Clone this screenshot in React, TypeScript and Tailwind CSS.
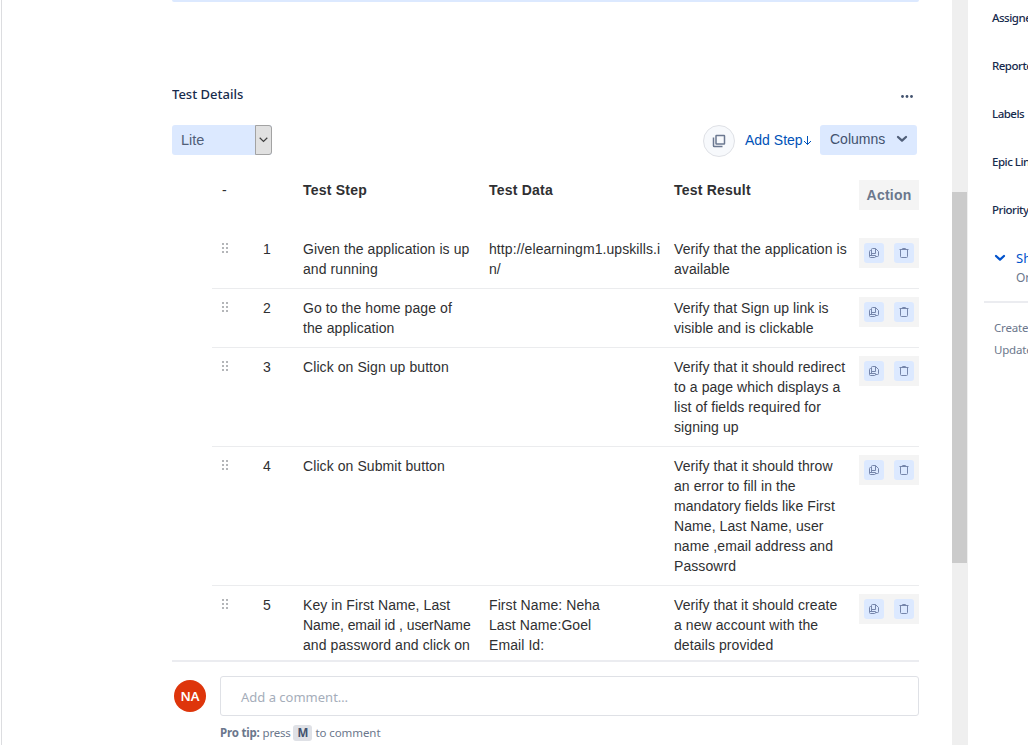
import React from "react";

type Step = { step: string[]; data: string[]; result: string[] };

const steps: Step[] = [
  {
    step: ["Given the application is up", "and running"],
    data: ["http://elearningm1.upskills.i", "n/"],
    result: ["Verify that the application is", "available"],
  },
  {
    step: ["Go to the home page of", "the application"],
    data: [],
    result: ["Verify that Sign up link is", "visible and is clickable"],
  },
  {
    step: ["Click on Sign up button"],
    data: [],
    result: [
      "Verify that it should redirect",
      "to a page which displays a",
      "list of fields required for",
      "signing up",
    ],
  },
  {
    step: ["Click on Submit button"],
    data: [],
    result: [
      "Verify that it should throw",
      "an error to fill in the",
      "mandatory fields like First",
      "Name, Last Name, user",
      "name ,email address and",
      "Passowrd",
    ],
  },
  {
    step: ["Key in First Name, Last", "Name, email id , userName", "and password and click on"],
    data: ["First Name: Neha", "Last Name:Goel", "Email Id:"],
    result: ["Verify that it should create", "a new account with the", "details provided"],
  },
];

const fields = ["Assignee", "Reporter", "Labels", "Epic Link", "Priority"];

const Lines = ({ lines }: { lines: string[] }) => (
  <div className="whitespace-nowrap">
    {lines.map((l) => (
      <div key={l} className={l.includes("userName") ? "tracking-[-0.08px]" : ""}>
        {l}
      </div>
    ))}
  </div>
);

const Grip = () => (
  <svg width="8" height="12" viewBox="0 0 8 12" fill="#b4b6b9">
    {[0, 4, 8].map((y) => (
      <g key={y}>
        <rect x="0" y={y} width="2" height="2" />
        <rect x="4" y={y} width="2" height="2" />
      </g>
    ))}
  </svg>
);

const CloneIcon = () => (
  <svg width="10" height="10" viewBox="0 0 10 10" fill="none" stroke="#7686ab" strokeWidth="1">
    <path d="M2.500 7.500v-6q0-1 1-1h3l3 3v4q0 1-1 1h-2" />
    <path d="M2.500 2.500h-1q-1 0-1 1v5q0 1 1 1h4q1 0 1-1v-1h-6M6.500 .5v5h-4" />
  </svg>
);

const TrashIcon = () => (
  <svg width="10" height="10" viewBox="0 0 10 10" fill="none" stroke="#7686ab" strokeWidth="1">
    <path d="M.5 1.500h9M3 1.500q0-1 1-1h2q1 0 1 1M1.500 1.500v7q0 1 1 1h5q1 0 1-1v-7" />
  </svg>
);

const Chevron = ({ className }: { className: string }) => (
  <svg className={className} width="12" height="8" viewBox="0 0 12 8" fill="none" stroke="currentColor" strokeWidth="2.300" strokeLinecap="round" strokeLinejoin="round">
    <path d="M2 2l4 3.600L10 2" />
  </svg>
);

const Row = ({ row, index }: { row: Step; index: number }) => (
  <div className="ml-[40px] flex w-[707px] shrink-0 border-b border-[#ebecee] pt-[9px] pb-[9px] tracking-[0.08px]">
    <div className="w-[51px] pt-[4px] pl-[10px]">
      <Grip />
    </div>
    <div className="w-[40px]">{index}</div>
    <div className="w-[186px]">
      <Lines lines={row.step} />
    </div>
    <div className="w-[185px]">
      <Lines lines={row.data} />
    </div>
    <div className="w-[185px]">
      <Lines lines={row.result} />
    </div>
    <div className="-mt-px flex h-[30px] w-[60px] items-center gap-[10px] bg-[#f4f4f4] pl-[5px]">
      <span className="flex size-5 items-center justify-center rounded-[3px] bg-[#dce9ff]">
        <CloneIcon />
      </span>
      <span className="flex size-5 items-center justify-center rounded-[3px] bg-[#dce9ff]">
        <TrashIcon />
      </span>
    </div>
  </div>
);

export default function App() {
  return (
    <div className="flex h-[745px] w-[1028px] overflow-hidden bg-white font-['Liberation_Sans',sans-serif] text-[14px] leading-5 text-[#2f3032]">
      <div className="ml-px flex w-[951px] flex-col border-l border-[#dcdde0] pl-[170px]">
        <div className="flex h-[660px] w-[747px] flex-col overflow-hidden">
          <div className="h-[2px] shrink-0 rounded-b-[3px] bg-[#dce9ff]" />
          <div className="mt-[82px] flex h-5 shrink-0 items-center justify-between pr-[6px]">
            <h2 className="font-['Noto_Sans',sans-serif] text-[13px] font-medium text-[#172b4d]">Test Details</h2>
            <svg className="mt-[4px]" width="12" height="3" viewBox="0 0 12 3" fill="#42526e">
              <circle cx="1.500" cy="1.500" r="1.400" />
              <circle cx="6" cy="1.500" r="1.400" />
              <circle cx="10.500" cy="1.500" r="1.400" />
            </svg>
          </div>
          <div className="mt-[21px] flex h-8 shrink-0 items-start">
            <div className="flex h-[30px] w-[100px] items-center justify-between rounded-[3px] bg-[#dce9ff] pl-[9px] text-[14.500px] text-[#505f79]">
              <span>Lite</span>
              <span className="flex h-[30px] w-[17px] items-center justify-center rounded-r-[3px] border border-[#a3a3a3] bg-[#e1e1e1]">
                <svg width="9" height="6" viewBox="0 0 9 6" fill="none" stroke="#404040" strokeWidth="1.200">
                  <path d="M.7.8l3.800 3.700L8.300.8" />
                </svg>
              </span>
            </div>
            <div className="ml-[431px] flex size-8 items-center justify-center rounded-full border border-[#dfe1e6] bg-[#f7f9fc]">
              <svg width="14" height="14" viewBox="0 0 14 14" fill="none" stroke="#6b7890" strokeWidth="1.500">
                <rect x="4" y="1.500" width="8.500" height="8.500" rx="0.500" />
                <path d="M1.500 3.500v8.200q0 .8.800.8h8.200" />
              </svg>
            </div>
            <div className="ml-[10px] flex h-[30px] w-[75px] items-center text-[#0052b8]">
              <span className="w-[58px] text-[14px] whitespace-nowrap">Add Step</span>
              <svg className="mt-px shrink-0" width="9" height="10" viewBox="0 0 9 10" fill="none" stroke="currentColor" strokeWidth="1">
                <path d="M4.500 0v8.500M1 5l3.500 3.500L8 5" />
              </svg>
            </div>
            <div className="flex h-[30px] w-[97px] items-center justify-between rounded-[3px] bg-[#dce9ff] pr-[9px] pb-[2px] pl-[10px] text-[14px] text-[#42526e]">
              <span>Columns</span>
              <Chevron className="text-[#505f79]" />
            </div>
          </div>
          <div className="mt-[23px] ml-[39px] flex h-[50px] w-[708px] shrink-0 text-[14px] font-bold tracking-[0.22px]">
            <div className="w-[92px] pl-[11px] font-normal">-</div>
            <div className="w-[186px]">Test Step</div>
            <div className="w-[185px]">Test Data</div>
            <div className="w-[185px]">Test Result</div>
            <div className="flex h-[30px] w-[60px] items-center justify-center bg-[#f4f4f4] text-[#6b778c]">Action</div>
          </div>
          {steps.map((s, i) => (
            <Row key={i} row={s} index={i + 1} />
          ))}
        </div>
        <div className="h-[85px] w-[747px] border-t-2 border-[#ebecf0] pt-[14px] font-['Noto_Sans',sans-serif]">
          <div className="flex items-center">
            <div className="ml-[2px] flex size-8 items-center justify-center rounded-full bg-[#de350b] text-[13px] font-semibold text-white">NA</div>
            <div className="ml-[14px] flex h-10 w-[699px] items-center rounded-[3px] border border-[#dfe1e6] pt-[2px] pl-[20px] text-[13px] text-[#a5adba]">
              Add a comment…
            </div>
          </div>
          <div className="mt-[7px] ml-12 flex items-center text-[11.500px] tracking-[-0.08px] text-[#6b778c]">
            <b className="tracking-[-0.2px]">Pro tip:</b>
            <span className="ml-[3px] tracking-[-0.25px]">press</span>
            <b className="mx-[3px] flex h-4 w-[19px] items-center justify-center rounded-[3px] bg-[#dfe1e6] text-[#42526e]">M</b>
            <span>to comment</span>
          </div>
        </div>
      </div>
      <div className="w-4 shrink-0 bg-[#efefef]">
        <div className="mt-[192px] h-[371px] w-[15px] bg-[#cbcbcb]" />
      </div>
      <div className="w-[60px] shrink-0 overflow-hidden pl-4 font-['Noto_Sans',sans-serif] text-[12px] whitespace-nowrap">
        <div className="pt-[8px] pl-[8px] font-medium text-[#172b4d]">
          {fields.map((f) => (
            <div key={f} className="h-12 text-[11.500px] tracking-[-0.500px]">
              {f}
            </div>
          ))}
        </div>
        <div className="flex h-5 items-center pl-[10px] text-[#0052cc]">
          <Chevron className="shrink-0" />
          <span className="ml-[10px] text-[13px]">Show more</span>
        </div>
        <div className="h-[35px] border-b-2 border-[#ebecf0] pl-8 text-[12px] text-[#6b778c]">Original Estimate</div>
        <div className="mt-[14px] pl-[10px] text-[11.500px] leading-[22px] tracking-[-0.2px] text-[#6b778c]">
          <div>Created</div>
          <div>Updated</div>
        </div>
      </div>
    </div>
  );
}
